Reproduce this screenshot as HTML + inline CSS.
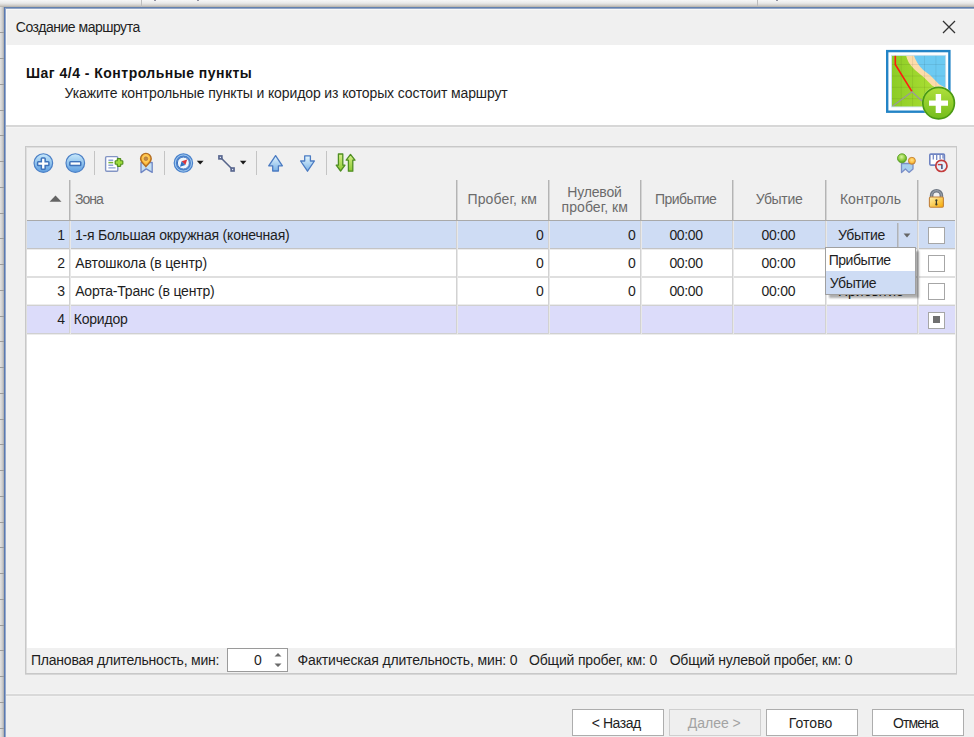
<!DOCTYPE html>
<html><head><meta charset="utf-8">
<style>
*{box-sizing:border-box}
html,body{margin:0;padding:0;width:974px;height:737px;overflow:hidden;background:#f0f0f0;font-family:"Liberation Sans",sans-serif;font-size:13.5px;color:#1e1e1e;position:relative}
.a{position:absolute}
.t{position:absolute;line-height:20px;white-space:pre}
.hl{position:absolute;background:#d2d2d2;height:1px}
.vl{position:absolute;background:#d2d2d2;width:1px}
.hd{color:#6e6e6e}
.btn{position:absolute;top:709px;height:27px;width:92px;border:1px solid #adadad;background:#fff}
.cb{position:absolute;left:928px;width:17px;height:17px;border:1px solid #a6a6a6;background:#fff}
</style></head><body>

<!-- background window -->
<div class="a" style="left:0;top:0;width:974px;height:7px;background:linear-gradient(#f7f7f7,#e9e9e9 45%,#d2d0cc 75%,#b3afa9)"></div>
<div class="a" style="left:141px;top:0;width:1px;height:7px;background:#bdbdbd"></div>
<div class="a" style="left:154px;top:0;width:2px;height:1px;background:#9090a0"></div>
<div class="a" style="left:197px;top:0;width:2px;height:1px;background:#9090a0"></div>
<div class="a" style="left:776px;top:0;width:2px;height:1px;background:#9090a0"></div>
<div class="a" style="left:757px;top:0;width:1px;height:6px;background:#bdbdbd"></div>
<div class="a" style="left:0;top:7px;width:4px;height:730px;background:linear-gradient(90deg,#e2e2e2,#cfcfcf 55%,#a9a9a9)"></div>
<div class="a" style="left:0;top:32px;width:4px;height:1px;background:#9c9c9c"></div>
<div class="a" style="left:0;top:58px;width:4px;height:1px;background:#9c9c9c"></div>
<div class="a" style="left:0;top:84px;width:4px;height:1px;background:#9c9c9c"></div>
<div class="a" style="left:0;top:110px;width:4px;height:1px;background:#9c9c9c"></div>
<div class="a" style="left:0;top:135px;width:4px;height:1px;background:#9c9c9c"></div>
<div class="a" style="left:0;top:161px;width:4px;height:1px;background:#9c9c9c"></div>
<div class="a" style="left:0;top:187px;width:4px;height:1px;background:#9c9c9c"></div>
<div class="a" style="left:0;top:213px;width:4px;height:1px;background:#9c9c9c"></div>
<div class="a" style="left:0;top:238px;width:4px;height:1px;background:#9c9c9c"></div>
<div class="a" style="left:0;top:264px;width:4px;height:1px;background:#9c9c9c"></div>
<div class="a" style="left:0;top:290px;width:4px;height:1px;background:#9c9c9c"></div>
<div class="a" style="left:0;top:316px;width:4px;height:1px;background:#9c9c9c"></div>
<div class="a" style="left:0;top:341px;width:4px;height:1px;background:#9c9c9c"></div>
<div class="a" style="left:0;top:367px;width:4px;height:1px;background:#9c9c9c"></div>
<div class="a" style="left:0;top:393px;width:4px;height:1px;background:#9c9c9c"></div>
<div class="a" style="left:0;top:419px;width:4px;height:1px;background:#9c9c9c"></div>
<div class="a" style="left:0;top:444px;width:4px;height:1px;background:#9c9c9c"></div>
<div class="a" style="left:0;top:470px;width:4px;height:1px;background:#9c9c9c"></div>
<div class="a" style="left:0;top:496px;width:4px;height:1px;background:#9c9c9c"></div>
<div class="a" style="left:0;top:522px;width:4px;height:1px;background:#9c9c9c"></div>
<div class="a" style="left:0;top:547px;width:4px;height:1px;background:#9c9c9c"></div>
<div class="a" style="left:0;top:573px;width:4px;height:1px;background:#9c9c9c"></div>
<div class="a" style="left:0;top:599px;width:4px;height:1px;background:#9c9c9c"></div>
<div class="a" style="left:0;top:625px;width:4px;height:1px;background:#9c9c9c"></div>
<div class="a" style="left:0;top:650px;width:4px;height:1px;background:#9c9c9c"></div>
<div class="a" style="left:0;top:676px;width:4px;height:1px;background:#9c9c9c"></div>
<div class="a" style="left:0;top:702px;width:4px;height:1px;background:#9c9c9c"></div>
<div class="a" style="left:0;top:728px;width:4px;height:1px;background:#9c9c9c"></div>

<!-- dialog frame -->
<div class="a" style="left:4px;top:7px;width:970px;height:1px;background:#6481ae"></div>
<div class="a" style="left:5px;top:8px;width:969px;height:1px;background:#93a6c6"></div>
<div class="a" style="left:4px;top:7px;width:1px;height:730px;background:#5a79b0"></div>
<div class="a" style="left:5px;top:8px;width:1px;height:729px;background:#93a8cc"></div>

<!-- title bar -->
<div class="a" style="left:6px;top:9px;width:968px;height:36px;background:#f0f0f0;border-top:1px solid #f8f8f8;border-left:1px solid #f8f8f8"></div>
<svg class="a" style="left:942px;top:20px" width="14" height="14" viewBox="0 0 14 14"><path d="M1 1L13 13M13 1L1 13" stroke="#333" stroke-width="1.3"/></svg>

<!-- header -->
<div class="a" style="left:6px;top:45px;width:968px;height:80px;background:#fff"></div>
<div class="a" style="left:6px;top:125px;width:968px;height:2px;background:#d7d7d7"></div>
<div class="a" style="left:6px;top:127px;width:968px;height:1px;background:#f4f4f4"></div>


<!-- group frame -->
<div class="a" style="left:25px;top:146px;width:932px;height:528px;border:1px solid #c8c8c8;box-shadow:inset 1px 1px 0 #dedede,0 1px 0 #d6d6d6"></div>
<svg class="a" style="left:0;top:0" width="974" height="737" viewBox="0 0 974 737">
<defs>
<linearGradient id="gb" x1="0" y1="0" x2="0" y2="1"><stop offset="0" stop-color="#c9e9fb"/><stop offset="0.55" stop-color="#8cc0ec"/><stop offset="1" stop-color="#5e9de0"/></linearGradient>
<linearGradient id="ga" x1="0" y1="0" x2="0" y2="1"><stop offset="0" stop-color="#e4f6fe"/><stop offset="1" stop-color="#7ab2e6"/></linearGradient>
<linearGradient id="gg" x1="0" y1="0" x2="0" y2="1"><stop offset="0" stop-color="#d6f08a"/><stop offset="1" stop-color="#8cc830"/></linearGradient>
<linearGradient id="gy" x1="0" y1="0" x2="1" y2="1"><stop offset="0" stop-color="#fff2b0"/><stop offset="1" stop-color="#f6a800"/></linearGradient>
<radialGradient id="gor" cx="0.5" cy="0.4" r="0.6"><stop offset="0" stop-color="#ffe08a"/><stop offset="0.6" stop-color="#ffc040"/><stop offset="1" stop-color="#c8842c"/></radialGradient>
<radialGradient id="ggr" cx="0.45" cy="0.35" r="0.65"><stop offset="0" stop-color="#d8f4a0"/><stop offset="0.6" stop-color="#8ccc3c"/><stop offset="1" stop-color="#4a9a18"/></radialGradient>
<linearGradient id="gpl" x1="0" y1="0" x2="0" y2="1"><stop offset="0" stop-color="#b0e03c"/><stop offset="1" stop-color="#74bc1c"/></linearGradient>
<linearGradient id="gmap" x1="0" y1="0" x2="1" y2="0"><stop offset="0" stop-color="#8ccc26"/><stop offset="1" stop-color="#b4e436"/></linearGradient>
</defs>
<!-- plus circle -->
<circle cx="43.35" cy="163.05" r="9.3" fill="url(#gb)" stroke="#4d80c6" stroke-width="1.2"/>
<path d="M42.10 158.65 L44.40 158.65 L44.40 162.40 L48.15 162.40 L48.15 164.70 L44.40 164.70 L44.40 168.45 L42.10 168.45 L42.10 164.70 L38.35 164.70 L38.35 162.40 L42.10 162.40Z" fill="#fff" stroke="#3e72ba" stroke-width="3" stroke-linejoin="round" paint-order="stroke"/>
<!-- minus circle -->
<circle cx="75.3" cy="163.05" r="9.3" fill="url(#gb)" stroke="#4d80c6" stroke-width="1.2"/>
<rect x="70.6" y="162.4" width="9.4" height="2.3" fill="#fff" stroke="#3e72ba" stroke-width="3" stroke-linejoin="round" paint-order="stroke"/>
<rect x="94" y="151" width="1" height="24" fill="#c4c4c4"/>
<!-- doc with plus -->
<rect x="105.6" y="156.6" width="12.2" height="14.6" rx="1.2" fill="#fff" stroke="#8294c4" stroke-width="1.4"/>
<path d="M108.4 160.3H113.2M108.4 165.2H113.2M108.4 167.9H115.6" stroke="#8ea2d6" stroke-width="1.4"/>
<path d="M108.4 162.6H113.2" stroke="#74b43a" stroke-width="1.5"/>
<path d="M117.80 159.20 L120.20 159.20 L120.20 161.30 L122.30 161.30 L122.30 163.70 L120.20 163.70 L120.20 165.80 L117.80 165.80 L117.80 163.70 L115.70 163.70 L115.70 161.30 L117.80 161.30Z" fill="#9edc3c" stroke="#4f8c1c" stroke-width="2.2" stroke-linejoin="round" paint-order="stroke"/>
<!-- pin with ribbon -->
<path d="M141 162.5V172.6L146.2 168.9L152.2 172.4V162.5Z" fill="#c4e0f4" stroke="#6f86c4" stroke-width="1.3" stroke-linejoin="round"/>
<path d="M145.9 166.6C143.8 163.8 140.6 161.8 140.6 158.7A5.3 5.3 0 0 1 151.2 158.7C151.2 161.8 148 163.8 145.9 166.6Z" fill="url(#gor)" stroke="#b46e22" stroke-width="1.4"/>
<circle cx="145.9" cy="158.7" r="1.9" fill="#c08848" stroke="#a87030" stroke-width="0.6"/>
<rect x="164" y="151" width="1" height="24" fill="#c4c4c4"/>
<!-- compass -->
<circle cx="183.4" cy="163.05" r="8.0" fill="none" stroke="#4a82cc" stroke-width="3.6"/>
<circle cx="183.4" cy="163.05" r="8.1" fill="none" stroke="#b4d8f6" stroke-width="0.9"/>
<circle cx="183.4" cy="163.05" r="6.0" fill="#eef6fc" stroke="#3a70c0" stroke-width="1"/>
<path d="M181.6 161.2L187.2 159.6L185.4 165Z" fill="#d8343c"/>
<path d="M181.6 161.2L185.4 165L180 166.7Z" fill="#2e70c0"/>
<path d="M196.8 160.8H203.6L200.2 164.4Z" fill="#1a1a1a"/>
<!-- line icon -->
<path d="M220.3 157.3L232.6 169.5" stroke="#56648a" stroke-width="1.6"/>
<rect x="218.1" y="155.1" width="4.6" height="4.6" fill="#5a6890"/>
<rect x="230.3" y="167.2" width="4.6" height="4.6" fill="#5a6890"/>
<rect x="219.8" y="156.8" width="1.2" height="1.2" fill="#dfe8f8"/>
<rect x="232" y="168.9" width="1.2" height="1.2" fill="#dfe8f8"/>
<path d="M239.9 160.8H246.4L243.15 164.6Z" fill="#1a1a1a"/>
<rect x="256" y="151" width="1" height="24" fill="#c4c4c4"/>
<!-- up arrow -->
<path d="M275.6 155.6L282.4 165.8H278.4V171H272.7V165.8H268.7Z" fill="url(#ga)" stroke="#4b7bc2" stroke-width="1.3" stroke-linejoin="round"/>
<!-- down arrow -->
<path d="M307.5 171.2L314.4 161H310.4V155.8H304.7V161H300.6Z" fill="url(#ga)" stroke="#4b7bc2" stroke-width="1.3" stroke-linejoin="round"/>
<rect x="326" y="151" width="1" height="24" fill="#c4c4c4"/>
<!-- green sort -->
<path d="M340.6 171L345 165.2H342.8V154H338.4V165.2H336.2Z" fill="url(#gg)" stroke="#4f8e22" stroke-width="1.3" stroke-linejoin="round"/>
<path d="M350.5 154.4L355 160.2H352.8V171.2H348.4V160.2H346.2Z" fill="url(#gg)" stroke="#4f8e22" stroke-width="1.3" stroke-linejoin="round"/>
<!-- right icon A -->
<path d="M901.5 163.5V172.6L905.4 169L909 172.4L913 169V163.5Z" fill="#a8d0ee" stroke="#7a8ec8" stroke-width="1.3" stroke-linejoin="round"/>
<circle cx="902" cy="158.3" r="4.5" fill="url(#ggr)" stroke="#5a9e28" stroke-width="0.9"/>
<circle cx="911.9" cy="160.8" r="3.5" fill="url(#gor)" stroke="#c48438" stroke-width="0.9"/>
<!-- right icon B -->
<rect x="929.8" y="154.1" width="14.6" height="11" rx="1" fill="#fff" stroke="#6f84c2" stroke-width="1.6"/>
<path d="M933.3 154.5V159.5M936.7 154.5V160M940.1 154.5V159.5M943 154.5V158.5" stroke="#7488c4" stroke-width="1.3"/>
<circle cx="941.4" cy="165.9" r="5.6" fill="#e6f0fb" stroke="#c43c3c" stroke-width="1.7"/>
<path d="M937.8 164.6H942.3" stroke="#d03a3a" stroke-width="1.4"/>
<path d="M941.9 164.6V169" stroke="#3e4e7c" stroke-width="1.5"/>
<!-- lock -->
<path d="M931.6 197.5V195.6A4.9 4.9 0 0 1 941.4 195.6V197.5" fill="none" stroke="#6f7884" stroke-width="3.6"/>
<path d="M931.6 197.5V195.6A4.9 4.9 0 0 1 941.4 195.6V197.5" fill="none" stroke="#a4acb6" stroke-width="1"/>
<rect x="929.4" y="197" width="14" height="10.2" rx="1.2" fill="url(#gy)" stroke="#c2823c" stroke-width="1.1"/>
<path d="M936.4 200V204.5" stroke="#3a3a2a" stroke-width="1.2"/>
<circle cx="936.4" cy="200.3" r="1.1" fill="#3a3a2a"/>
<circle cx="936.4" cy="204.4" r="1.1" fill="#3a3a2a"/>
<!-- map icon -->
<rect x="887.2" y="51.1" width="62.2" height="60.6" fill="#fff" stroke="#2384c6" stroke-width="2.4"/>
<clipPath id="mc"><rect x="891.4" y="55.3" width="54.3" height="51.6"/></clipPath>
<g clip-path="url(#mc)">
<rect x="891.4" y="55.3" width="54.3" height="51.6" fill="url(#gmap)"/>
<path d="M906 55C907 60 909 64 915 70L924 77.5L932 85.4L946 94V55Z" fill="#fcdcaa"/>
<path d="M913.7 55C915.5 60 918 64.7 923.2 70.1L930.5 75.6L939 84.2L946 88V55Z" fill="#6ccaf2"/>
<path d="M901.2 55V107M912.6 55V107M924.5 55V107M935.9 55V107M891 64.5H946M891 76H946M891 87.3H946M891 98.7H946" stroke="#000" stroke-opacity="0.07" stroke-width="1"/>
<path d="M895.3 55V64.5L912 91.7" fill="none" stroke="#ff1a10" stroke-width="1.6"/>
<path d="M892.5 106.3L912 91.7L922 101" fill="none" stroke="#9a9a9a" stroke-width="1.2"/>
</g>
<rect x="891.4" y="55.3" width="54.3" height="51.6" fill="none" stroke="#c8e0f4" stroke-width="0.8"/>
<circle cx="938.6" cy="103.1" r="16.8" fill="#fff" fill-opacity="0.6"/>
<circle cx="938.6" cy="103.1" r="15.8" fill="url(#gpl)" stroke="#4a9a12" stroke-width="1.7"/>
<path d="M929 103.1H948M938.4 93.9V112.9" stroke="#fff" stroke-width="5.4"/>
</svg>


<!-- grid -->
<div class="a" style="left:27px;top:221px;width:928px;height:427px;background:#fff"></div>
<div class="a" style="left:69px;top:180px;width:1px;height:40px;background:#b4b4b4"></div>
<div class="a" style="left:70px;top:180px;width:1px;height:40px;background:#d4d4d4"></div>
<div class="a" style="left:456px;top:180px;width:1px;height:40px;background:#b4b4b4"></div>
<div class="a" style="left:457px;top:180px;width:1px;height:40px;background:#d4d4d4"></div>
<div class="a" style="left:548px;top:180px;width:1px;height:40px;background:#b4b4b4"></div>
<div class="a" style="left:549px;top:180px;width:1px;height:40px;background:#d4d4d4"></div>
<div class="a" style="left:640px;top:180px;width:1px;height:40px;background:#b4b4b4"></div>
<div class="a" style="left:641px;top:180px;width:1px;height:40px;background:#d4d4d4"></div>
<div class="a" style="left:732px;top:180px;width:1px;height:40px;background:#b4b4b4"></div>
<div class="a" style="left:733px;top:180px;width:1px;height:40px;background:#d4d4d4"></div>
<div class="a" style="left:825px;top:180px;width:1px;height:40px;background:#b4b4b4"></div>
<div class="a" style="left:826px;top:180px;width:1px;height:40px;background:#d4d4d4"></div>
<div class="a" style="left:917px;top:180px;width:1px;height:40px;background:#b4b4b4"></div>
<div class="a" style="left:918px;top:180px;width:1px;height:40px;background:#d4d4d4"></div>
<div class="a" style="left:27px;top:220px;width:928px;height:1px;background:#a9a9a9"></div>
<div class="a" style="left:27px;top:221px;width:928px;height:27px;background:#cedcf4"></div>
<div class="a" style="left:27px;top:306px;width:928px;height:27px;background:#dcdcfa"></div>
<div class="a" style="left:27px;top:248px;width:928px;height:1px;background:#c4c4c4"></div>
<div class="a" style="left:27px;top:249px;width:928px;height:1px;background:#ececec"></div>
<div class="a" style="left:27px;top:276px;width:928px;height:2px;background:#dfdfdf"></div>
<div class="a" style="left:27px;top:304px;width:928px;height:1px;background:#ececec"></div>
<div class="a" style="left:27px;top:305px;width:928px;height:1px;background:#d0d0d0"></div>
<div class="a" style="left:27px;top:333px;width:928px;height:1px;background:#d0d0d0"></div>
<div class="a" style="left:27px;top:334px;width:928px;height:1px;background:#ececec"></div>
<div class="a" style="left:69px;top:221px;width:1px;height:113px;background:#d2d2d2"></div>
<div class="a" style="left:70px;top:221px;width:1px;height:113px;background:#e8e8e8"></div>
<div class="a" style="left:456px;top:221px;width:1px;height:113px;background:#d2d2d2"></div>
<div class="a" style="left:457px;top:221px;width:1px;height:113px;background:#e8e8e8"></div>
<div class="a" style="left:548px;top:221px;width:1px;height:113px;background:#d2d2d2"></div>
<div class="a" style="left:549px;top:221px;width:1px;height:113px;background:#e8e8e8"></div>
<div class="a" style="left:640px;top:221px;width:1px;height:113px;background:#d2d2d2"></div>
<div class="a" style="left:641px;top:221px;width:1px;height:113px;background:#e8e8e8"></div>
<div class="a" style="left:732px;top:221px;width:1px;height:113px;background:#d2d2d2"></div>
<div class="a" style="left:733px;top:221px;width:1px;height:113px;background:#e8e8e8"></div>
<div class="a" style="left:825px;top:221px;width:1px;height:113px;background:#d2d2d2"></div>
<div class="a" style="left:826px;top:221px;width:1px;height:113px;background:#e8e8e8"></div>
<div class="a" style="left:917px;top:221px;width:1px;height:113px;background:#d2d2d2"></div>
<div class="a" style="left:918px;top:221px;width:1px;height:113px;background:#e8e8e8"></div>
<svg class="a" style="left:49px;top:195px" width="13" height="7" viewBox="0 0 13 7"><path d="M0.5 6.8L6.5 0.5L12.5 6.8Z" fill="#646464"/></svg>
<div class="cb" style="top:227px"></div>
<div class="cb" style="top:255px"></div>
<div class="cb" style="top:283px"></div>
<div class="cb" style="top:312px"></div>
<div class="a" style="left:933px;top:316px;width:7px;height:7px;background:#707070"></div>
<div class="a" style="left:897px;top:223px;width:1px;height:24px;background:#aeb2b8"></div>
<div class="a" style="left:898px;top:223px;width:1px;height:24px;background:#c4c8d0"></div>
<svg class="a" style="left:903px;top:233px" width="8" height="5" viewBox="0 0 8 5"><path d="M0.6 0.6L7.4 0.6L4 4.4Z" fill="#666"/></svg>
<div class="t" style="left:15.85px;top:17.00px;font-size:14px;letter-spacing:-0.487px">Создание маршрута</div>
<div class="t" style="left:26.00px;top:63.20px;font-size:14px;font-weight:bold;letter-spacing:0.482px;color:#111">Шаг 4/4 - Контрольные пункты</div>
<div class="t" style="left:64.50px;top:83.00px;font-size:14px;letter-spacing:-0.112px">Укажите контрольные пункты и коридор из которых состоит маршрут</div>
<div class="t" style="left:75.10px;top:189.00px;font-size:14px;letter-spacing:-1.000px;color:#6b6b6b">Зона</div>
<div class="t" style="left:467.50px;top:189.00px;font-size:14px;letter-spacing:0.135px;color:#6b6b6b">Пробег, км</div>
<div class="t" style="left:567.30px;top:181.50px;font-size:14px;letter-spacing:-0.171px;color:#6b6b6b">Нулевой</div>
<div class="t" style="left:561.60px;top:196.90px;font-size:14px;letter-spacing:0.066px;color:#6b6b6b">пробег, км</div>
<div class="t" style="left:655.00px;top:189.30px;font-size:14px;letter-spacing:-0.569px;color:#6b6b6b">Прибытие</div>
<div class="t" style="left:755.70px;top:189.00px;font-size:14px;letter-spacing:-0.340px;color:#6b6b6b">Убытие</div>
<div class="t" style="left:839.90px;top:189.00px;font-size:14px;letter-spacing:0.054px;color:#6b6b6b">Контроль</div>
<div class="t" style="left:57.20px;top:224.50px;font-size:14px">1</div>
<div class="t" style="left:74.90px;top:224.50px;font-size:14px;letter-spacing:-0.185px">1-я Большая окружная (конечная)</div>
<div class="t" style="left:536.10px;top:224.50px;font-size:14px">0</div>
<div class="t" style="left:627.90px;top:224.50px;font-size:14px">0</div>
<div class="t" style="left:669.40px;top:224.50px;font-size:14px;letter-spacing:-0.337px">00:00</div>
<div class="t" style="left:761.50px;top:224.50px;font-size:14px;letter-spacing:-0.262px">00:00</div>
<div class="t" style="left:57.20px;top:252.80px;font-size:14px">2</div>
<div class="t" style="left:75.20px;top:252.80px;font-size:14px;letter-spacing:-0.090px">Автошкола (в центр)</div>
<div class="t" style="left:536.10px;top:252.80px;font-size:14px">0</div>
<div class="t" style="left:627.90px;top:252.80px;font-size:14px">0</div>
<div class="t" style="left:669.40px;top:252.80px;font-size:14px;letter-spacing:-0.337px">00:00</div>
<div class="t" style="left:761.50px;top:252.80px;font-size:14px;letter-spacing:-0.262px">00:00</div>
<div class="t" style="left:57.20px;top:281.00px;font-size:14px">3</div>
<div class="t" style="left:75.20px;top:281.00px;font-size:14px;letter-spacing:-0.202px">Аорта-Транс (в центр)</div>
<div class="t" style="left:536.10px;top:281.00px;font-size:14px">0</div>
<div class="t" style="left:627.90px;top:281.00px;font-size:14px">0</div>
<div class="t" style="left:669.40px;top:281.00px;font-size:14px;letter-spacing:-0.337px">00:00</div>
<div class="t" style="left:761.50px;top:281.00px;font-size:14px;letter-spacing:-0.262px">00:00</div>
<div class="t" style="left:57.20px;top:309.30px;font-size:14px">4</div>
<div class="t" style="left:73.70px;top:309.30px;font-size:14px;letter-spacing:-0.184px">Коридор</div>
<div class="t" style="left:838.00px;top:224.50px;font-size:14px;letter-spacing:-0.300px">Убытие</div>
<div class="t" style="left:838.01px;top:280.60px;font-size:14px">Прибытие</div>
<div class="a" style="left:825px;top:247px;width:91px;height:48px;border:1px solid #a0a0a0;background:#fff;box-shadow:3px 3px 2px -0.5px rgba(0,0,0,0.32)"></div>
<div class="a" style="left:826px;top:271px;width:89px;height:23px;background:#cedcf4"></div>
<div class="t" style="left:828.80px;top:249.60px;font-size:14px;letter-spacing:-0.512px">Прибытие</div>
<div class="t" style="left:829.80px;top:272.60px;font-size:14px;letter-spacing:-0.380px">Убытие</div>

<!-- status -->
<div class="a" style="left:227px;top:648px;width:61px;height:24px;border:1px solid #9a9a9a;background:#fff"></div>
<svg class="a" style="left:274px;top:652px" width="8" height="16" viewBox="0 0 8 16"><path d="M0.5 4.5L4 1L7.5 4.5Z M0.5 11.5L4 15L7.5 11.5Z" fill="#6a6a6a"/></svg>

<!-- bottom separator -->
<div class="a" style="left:6px;top:693px;width:968px;height:1px;background:#f3f3f3"></div>
<div class="a" style="left:6px;top:694px;width:968px;height:2px;background:#d9d9d9"></div>
<div class="a" style="left:6px;top:696px;width:968px;height:1px;background:#f3f3f3"></div>

<!-- buttons -->
<div class="btn" style="left:572px"></div>
<div class="btn" style="left:669px;background:#efefef;border-color:#cfcfcf"></div>
<div class="btn" style="left:766px"></div>
<div class="btn" style="left:872px"></div>

<div class="t" style="left:31.00px;top:650.00px;font-size:14px;letter-spacing:-0.229px">Плановая длительность, мин:</div>
<div class="t" style="left:254.10px;top:650.00px;font-size:14px">0</div>
<div class="t" style="left:297.50px;top:650.00px;font-size:14px;letter-spacing:-0.151px">Фактическая длительность, мин: 0</div>
<div class="t" style="left:529.00px;top:650.00px;font-size:14px;letter-spacing:-0.170px">Общий пробег, км: 0</div>
<div class="t" style="left:669.70px;top:650.00px;font-size:14px;letter-spacing:-0.216px">Общий нулевой пробег, км: 0</div>
<div class="t" style="left:591.80px;top:712.50px;font-size:14px;letter-spacing:-0.468px">&lt; Назад</div>
<div class="t" style="left:687.80px;top:712.50px;font-size:14px;letter-spacing:-0.016px;color:#a3a3a3">Далее &gt;</div>
<div class="t" style="left:788.70px;top:712.50px;font-size:14px;letter-spacing:0.071px">Готово</div>
<div class="t" style="left:893.00px;top:712.50px;font-size:14px;letter-spacing:-0.889px">Отмена</div>
</body></html>
